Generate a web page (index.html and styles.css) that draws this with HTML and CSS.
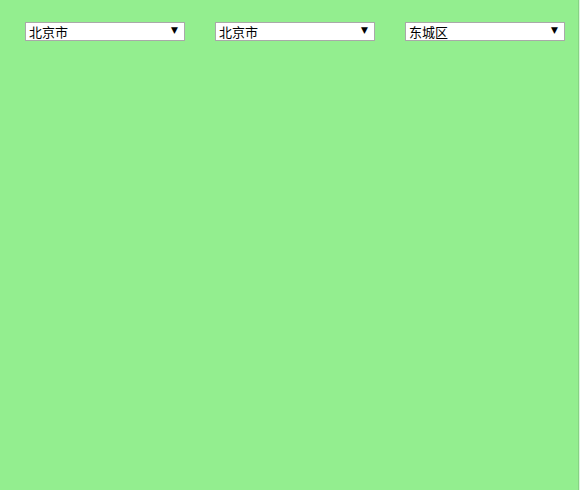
FILE: index.html
```html
<!DOCTYPE html>
<html lang="zh">
<head>
<meta charset="utf-8">
<title>省市区选择</title>
<link rel="stylesheet" href="styles.css">
</head>
<body>
<div class="page">
  <div class="pickers">
    <label class="pick">
      <select class="sel"><option>北京市</option></select>
      <span class="arrow">▼</span>
    </label>
    <label class="pick">
      <select class="sel"><option>北京市</option></select>
      <span class="arrow">▼</span>
    </label>
    <label class="pick">
      <select class="sel"><option>东城区</option></select>
      <span class="arrow">▼</span>
    </label>
  </div>
</div>
</body>
</html>
```
FILE: styles.css
```css
html, body {
  margin: 0;
  padding: 0;
  height: 100%;
  background: #dcf5dc;
}
.page {
  box-sizing: border-box;
  width: 579px;
  height: 100%;
  background: #93ee8f;
  border-right: 1px solid #86d383;
}
.pickers {
  display: flex;
  gap: 30px;
  padding: 22px 0 0 25px;
}
.pick {
  position: relative;
  display: block;
  width: 160px;
  height: 19px;
}
.sel {
  appearance: none;
  -webkit-appearance: none;
  box-sizing: border-box;
  width: 160px;
  height: 19px;
  margin: 0;
  padding: 0 0 0 3px;
  border: 1px solid #a9a9a9;
  border-radius: 0;
  background: #fff;
  color: #000;
  font-family: "Noto Sans CJK SC", "Liberation Sans", sans-serif;
  font-size: 13px;
  line-height: 17px;
}
.arrow {
  position: absolute;
  right: 7px;
  top: 3px;
  font-family: "DejaVu Sans", sans-serif;
  font-size: 9px;
  line-height: 10px;
  color: #000;
  pointer-events: none;
}
```
